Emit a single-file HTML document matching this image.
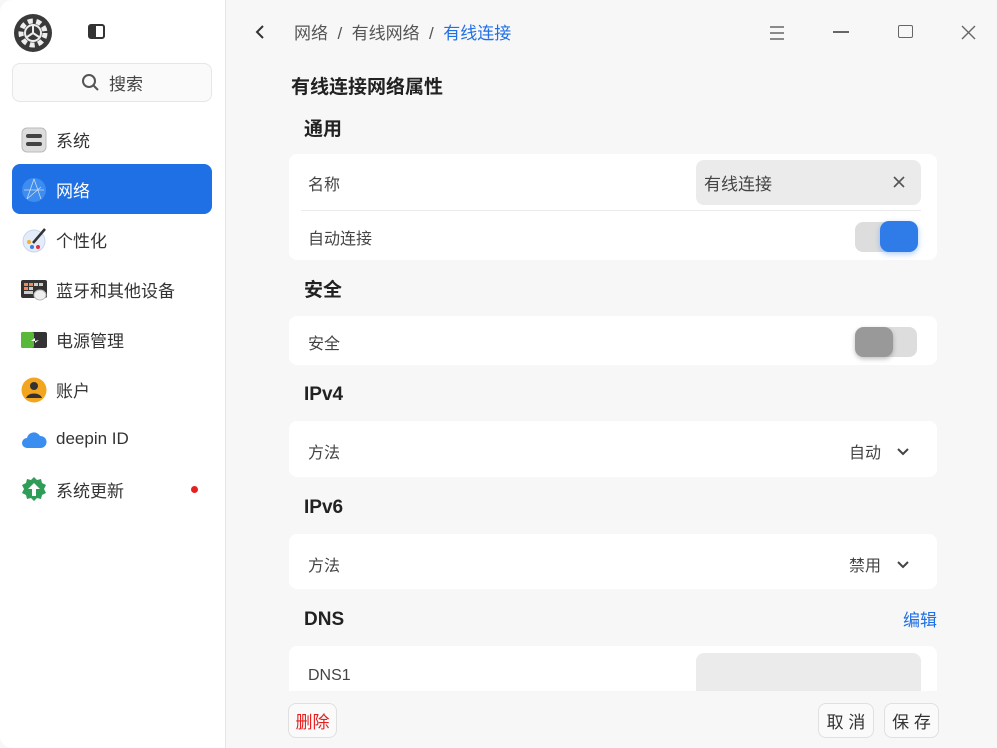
<!DOCTYPE html>
<html><head><meta charset="utf-8"><style>
*{box-sizing:border-box;margin:0;padding:0}
body{width:997px;height:748px;overflow:hidden;font-family:"Liberation Sans","Noto Sans CJK SC",sans-serif;background:#f7f7f7;position:relative;color:#333}
.side{position:absolute;left:0;top:0;width:226px;height:748px;background:#fff;border-right:1px solid #e6e6e6;border-radius:12px 0 0 12px}
.abs{position:absolute}
.item{position:absolute;left:12px;width:200px;height:50px;border-radius:8px;display:flex;align-items:center;padding-left:44px;font-size:17px;color:#333}
.item .ic{position:absolute;left:9px;top:13px;width:26px;height:26px}
.sel{background:#1f6fe5;color:#fff}
.h{position:absolute;left:304px;font-size:19px;font-weight:bold;color:#222}
.card{position:absolute;left:289px;width:648px;background:#fff;border-radius:8px}
.lbl{position:absolute;left:19px;font-size:16px;color:#444}
.btn{position:absolute;top:703px;height:35px;border:1px solid #e0e0e0;border-radius:8px;background:#fafafa;font-size:17px;display:flex;align-items:center;justify-content:center;color:#333}
</style></head><body>
<div class="side">
 <svg class="abs" style="left:13px;top:13px" width="40" height="40" viewBox="0 0 40 40"><circle cx="20" cy="20" r="19" fill="#3a3a3a"/><circle cx="20" cy="20" r="12" fill="none" stroke="#eee" stroke-width="5" stroke-dasharray="5 3.5"/><circle cx="20" cy="20" r="8" fill="#3a3a3a" stroke="#eee" stroke-width="2"/><path d="M20 20V13M20 20l6 4M20 20l-6 4" stroke="#eee" stroke-width="2"/></svg>
 <div class="abs" style="left:88px;top:24px;width:17px;height:15px;border:2px solid #333;border-radius:3px;background:linear-gradient(90deg,#333 45%,#fff 45%)"></div>
 <div class="abs" style="left:12px;top:63px;width:200px;height:39px;border:1px solid #e6e6e6;border-radius:8px;background:#fafafa;display:flex;align-items:center;justify-content:center;font-size:17px;color:#444"><svg width="20" height="20" viewBox="0 0 20 20" style="margin-right:8px"><circle cx="8" cy="8" r="6" fill="none" stroke="#555" stroke-width="2"/><path d="M12.5 12.5L17 17" stroke="#555" stroke-width="2"/></svg>搜索</div>
 <div class="item" style="top:114px"><svg class="ic" viewBox="0 0 26 26"><rect x="1" y="1" width="24" height="24" rx="5" fill="#ddd" stroke="#bbb"/><rect x="5" y="7" width="16" height="4" rx="2" fill="#444"/><rect x="5" y="15" width="16" height="4" rx="2" fill="#444"/></svg>系统</div>
 <div class="item sel" style="top:164px"><svg class="ic" viewBox="0 0 26 26"><circle cx="13" cy="13" r="12" fill="#3d8cf0"/><path d="M13 2L6 22M13 2l7 20M3 13h20M6 22l14-12" stroke="#cde" stroke-width=".8" fill="none"/></svg>网络</div>
 <div class="item" style="top:214px"><svg class="ic" viewBox="0 0 26 26"><circle cx="13" cy="14" r="11" fill="#e3ecf8" stroke="#c8d6ea"/><circle cx="8" cy="15" r="2" fill="#f0b030"/><circle cx="11" cy="20" r="2" fill="#3a7be0"/><circle cx="17" cy="20" r="2" fill="#e03040"/><path d="M12 16L24 2" stroke="#333" stroke-width="2.5"/></svg>个性化</div>
 <div class="item" style="top:264px"><svg class="ic" viewBox="0 0 26 26"><rect x="0" y="3" width="26" height="18" rx="2" fill="#333"/><g fill="#f08a5a"><rect x="3" y="6" width="4" height="3"/><rect x="8" y="6" width="4" height="3"/><rect x="3" y="10" width="4" height="3"/></g><g fill="#ccc"><rect x="13" y="6" width="4" height="3"/><rect x="18" y="6" width="4" height="3"/><rect x="8" y="10" width="4" height="3"/><rect x="3" y="14" width="9" height="3"/></g><ellipse cx="19" cy="18" rx="6" ry="5" fill="#eee" stroke="#bbb"/></svg>蓝牙和其他设备</div>
 <div class="item" style="top:314px"><svg class="ic" viewBox="0 0 26 26"><rect x="0" y="5" width="26" height="16" rx="2" fill="#333"/><rect x="0" y="5" width="13" height="16" rx="2" fill="#58b838"/><path d="M10 14l4-3v3l4-1-4 3v-2z" fill="#fff"/></svg>电源管理</div>
 <div class="item" style="top:364px"><svg class="ic" viewBox="0 0 26 26"><circle cx="13" cy="13" r="12.5" fill="#f2a51f"/><circle cx="13" cy="9" r="4" fill="#333"/><path d="M5 21c2-6 14-6 16 0z" fill="#333"/></svg>账户</div>
 <div class="item" style="top:414px"><svg class="ic" viewBox="0 0 26 26"><path d="M6 21a5 5 0 010-10 7 7 0 0113-2 6 6 0 011 12z" fill="#3a8ef0"/></svg>deepin ID</div>
 <div class="item" style="top:464px"><svg class="ic" viewBox="0 0 26 26"><path d="M13 0l3 3 4-1 1 4 4 2-2 4 2 4-4 2-1 4-4-1-3 3-3-3-4 1-1-4-4-2 2-4-2-4 4-2 1-4 4 1z" fill="#2f9c57"/><path d="M13 6l6 6h-4v7h-4v-7H7z" fill="#fff"/></svg>系统更新<span class="abs" style="left:179px;top:22px;width:7px;height:7px;border-radius:50%;background:#e52020"></span></div>
</div>
<svg class="abs" style="left:252px;top:24px" width="16" height="16" viewBox="0 0 16 16"><path d="M11 2L5 8l6 6" stroke="#333" stroke-width="2" fill="none"/></svg>
<div class="abs" style="left:294px;top:19px;font-size:17px;color:#555">网络&nbsp;&nbsp;/&nbsp;&nbsp;有线网络&nbsp;&nbsp;/&nbsp;&nbsp;<span style="color:#1f6fe5">有线连接</span></div>
<svg class="abs" style="left:768px;top:24px" width="18" height="18" viewBox="0 0 18 18"><path d="M2 3h14M2 9h14M2 15h14" stroke="#666" stroke-width="1.4"/></svg>
<div class="abs" style="left:833px;top:31px;width:16px;height:2px;background:#666"></div>
<div class="abs" style="left:898px;top:25px;width:15px;height:13px;border:1.6px solid #666;border-radius:2px"></div>
<svg class="abs" style="left:961px;top:25px" width="15" height="15" viewBox="0 0 15 15"><path d="M1 1l13 13M14 1L1 14" stroke="#666" stroke-width="1.4"/></svg>
<div class="abs" style="left:291px;top:72px;font-size:19px;font-weight:bold;color:#222">有线连接网络属性</div>
<div class="h" style="top:114px">通用</div>
<div class="card" style="top:154px;height:106px">
 <div class="lbl" style="top:17px">名称</div>
 <div class="abs" style="left:407px;top:6px;width:225px;height:45px;border-radius:8px;background:#ebebeb;font-size:17px;color:#444;padding:10px 8px">有线连接<svg class="abs" style="right:16px;top:16px" width="12" height="12" viewBox="0 0 12 12"><path d="M1 1l10 10M11 1L1 11" stroke="#555" stroke-width="1.6"/></svg></div>
 <div class="abs" style="left:12px;right:16px;top:56px;height:1px;background:#ebebeb"></div>
 <div class="lbl" style="top:71px">自动连接</div>
 <div class="abs" style="left:566px;top:68px;width:62px;height:30px;border-radius:8px;background:#ddd"></div>
 <div class="abs" style="left:591px;top:67px;width:38px;height:31px;border-radius:9px;background:#2f7ce8;box-shadow:0 2px 6px rgba(47,124,232,.4)"></div>
</div>
<div class="h" style="top:275px">安全</div>
<div class="card" style="top:316px;height:49px">
 <div class="lbl" style="top:14px">安全</div>
 <div class="abs" style="left:566px;top:11px;width:62px;height:30px;border-radius:8px;background:#ddd"></div>
 <div class="abs" style="left:566px;top:11px;width:38px;height:30px;border-radius:9px;background:#999;box-shadow:0 2px 5px rgba(0,0,0,.25)"></div>
</div>
<div class="h" style="top:384px">IPv4</div>
<div class="card" style="top:421px;height:56px">
 <div class="lbl" style="top:18px">方法</div>
 <div class="abs" style="left:560px;top:18px;font-size:16px;color:#444">自动</div>
 <svg class="abs" style="left:607px;top:26px" width="14" height="10" viewBox="0 0 14 10"><path d="M2 2l5 5 5-5" stroke="#444" stroke-width="2" fill="none"/></svg>
</div>
<div class="h" style="top:497px">IPv6</div>
<div class="card" style="top:534px;height:55px">
 <div class="lbl" style="top:18px">方法</div>
 <div class="abs" style="left:560px;top:18px;font-size:16px;color:#444">禁用</div>
 <svg class="abs" style="left:607px;top:26px" width="14" height="10" viewBox="0 0 14 10"><path d="M2 2l5 5 5-5" stroke="#444" stroke-width="2" fill="none"/></svg>
</div>
<div class="h" style="top:609px">DNS</div>
<div class="abs" style="left:903px;top:606px;font-size:17px;color:#1f6fe5">编辑</div>
<div class="card" style="top:646px;height:45px;border-radius:8px 8px 0 0">
 <div class="lbl" style="top:21px">DNS1</div>
 <div class="abs" style="left:407px;top:7px;width:225px;height:38px;border-radius:8px 8px 0 0;background:#ebebeb"></div>
</div>
<div class="btn" style="left:288px;width:49px;color:#e52020">删除</div>
<div class="btn" style="left:818px;width:56px">取 消</div>
<div class="btn" style="left:884px;width:55px">保 存</div>
</body></html>
